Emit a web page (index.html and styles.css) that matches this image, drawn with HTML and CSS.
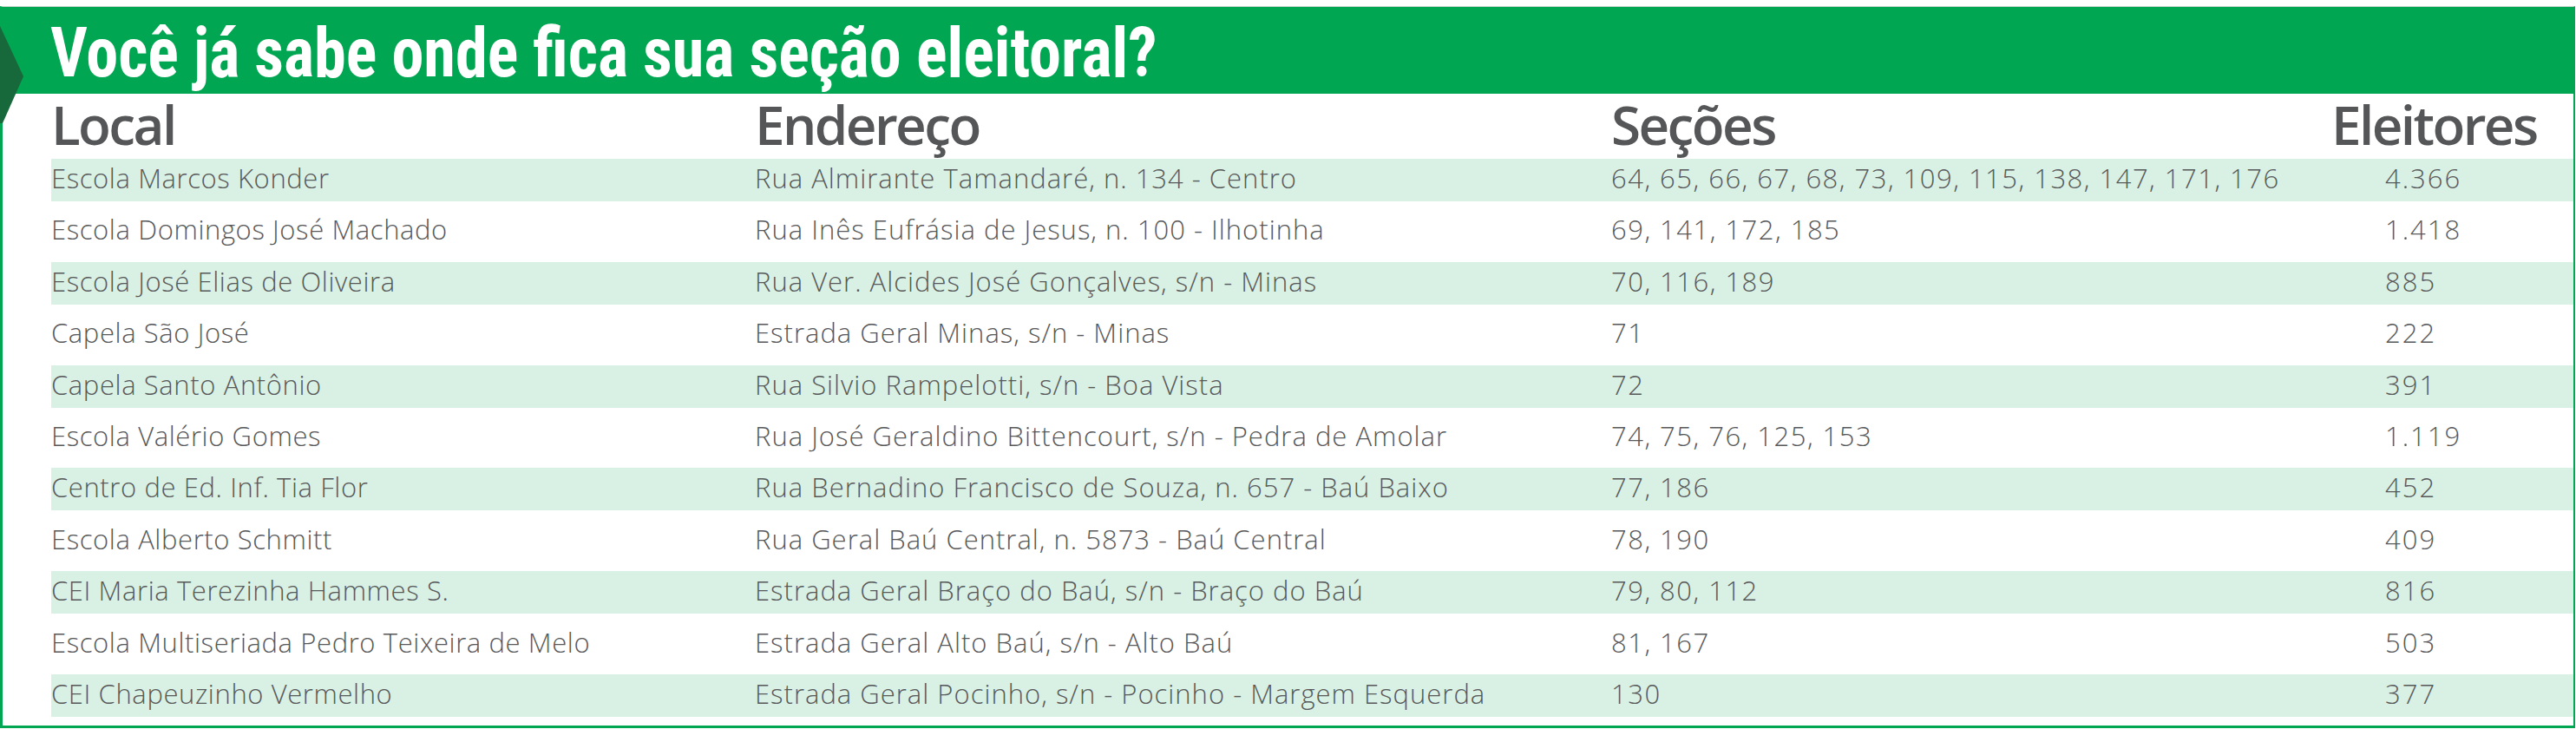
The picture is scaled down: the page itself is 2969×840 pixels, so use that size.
FILE: index.html
```html
<!DOCTYPE html>
<html lang="pt-BR">
<head>
<meta charset="utf-8">
<title>Você já sabe onde fica sua seção eleitoral?</title>
<link rel="stylesheet" href="styles.css">
</head>
<body>
<div class="frame">
  <svg class="arrow" width="28" height="113" viewBox="0 0 28 113" aria-hidden="true"><polygon points="0,0 27,58 3,112 0,112" fill="#17683a"/></svg>
  <div class="banner"><h1 class="title">Você já sabe onde fica sua seção eleitoral?</h1></div>
  <div class="row head">
    <div class="cell">Local</div>
    <div class="cell">Endereço</div>
    <div class="cell">Seções</div>
    <div class="cell">Eleitores</div>
  </div>
  <div class="rows">
    <div class="row alt"><div class="cell c-local">Escola Marcos Konder</div><div class="cell c-end">Rua Almirante Tamandaré, n. 134 - Centro</div><div class="cell c-sec">64, 65, 66, 67, 68, 73, 109, 115, 138, 147, 171, 176</div><div class="cell num">4.366</div></div>
    <div class="row"><div class="cell c-local">Escola Domingos José Machado</div><div class="cell c-end">Rua Inês Eufrásia de Jesus, n. 100 - Ilhotinha</div><div class="cell c-sec">69, 141, 172, 185</div><div class="cell num">1.418</div></div>
    <div class="row alt"><div class="cell c-local">Escola José Elias de Oliveira</div><div class="cell c-end">Rua Ver. Alcides José Gonçalves, s/n - Minas</div><div class="cell c-sec">70, 116, 189</div><div class="cell num">885</div></div>
    <div class="row"><div class="cell c-local">Capela São José</div><div class="cell c-end">Estrada Geral Minas, s/n - Minas</div><div class="cell c-sec">71</div><div class="cell num">222</div></div>
    <div class="row alt"><div class="cell c-local">Capela Santo Antônio</div><div class="cell c-end">Rua Silvio Rampelotti, s/n - Boa Vista</div><div class="cell c-sec">72</div><div class="cell num">391</div></div>
    <div class="row"><div class="cell c-local">Escola Valério Gomes</div><div class="cell c-end">Rua José Geraldino Bittencourt, s/n - Pedra de Amolar</div><div class="cell c-sec">74, 75, 76, 125, 153</div><div class="cell num">1.119</div></div>
    <div class="row alt"><div class="cell c-local">Centro de Ed. Inf. Tia Flor</div><div class="cell c-end">Rua Bernadino Francisco de Souza, n. 657 - Baú Baixo</div><div class="cell c-sec">77, 186</div><div class="cell num">452</div></div>
    <div class="row"><div class="cell c-local">Escola Alberto Schmitt</div><div class="cell c-end">Rua Geral Baú Central, n. 5873 - Baú Central</div><div class="cell c-sec">78, 190</div><div class="cell num">409</div></div>
    <div class="row alt"><div class="cell c-local">CEI Maria Terezinha Hammes S.</div><div class="cell c-end">Estrada Geral Braço do Baú, s/n - Braço do Baú</div><div class="cell c-sec">79, 80, 112</div><div class="cell num">816</div></div>
    <div class="row"><div class="cell c-local">Escola Multiseriada Pedro Teixeira de Melo</div><div class="cell c-end">Estrada Geral Alto Baú, s/n - Alto Baú</div><div class="cell c-sec">81, 167</div><div class="cell num">503</div></div>
    <div class="row alt"><div class="cell c-local">CEI Chapeuzinho Vermelho</div><div class="cell c-end">Estrada Geral Pocinho, s/n - Pocinho - Margem Esquerda</div><div class="cell c-sec">130</div><div class="cell num">377</div></div>
  </div>
</div>
</body>
</html>
```
FILE: styles.css
```css
html, body {
  margin: 0;
  padding: 0;
  background: #ffffff;
}
body {
  width: 2969px;
  height: 840px;
  padding-top: 7px;
  box-sizing: border-box;
  overflow: hidden;
}
.frame {
  position: relative;
  width: 2968px;
  box-sizing: border-box;
  border-top: 1px solid #c9d6cd;
  border-left: 3px solid #00a651;
  border-right: 2px solid #00a651;
  border-bottom: 3px solid #00a651;
  padding-bottom: 5px;
}
.arrow {
  position: absolute;
  left: -3px;
  top: 22px;
  display: block;
}
.banner {
  height: 100px;
  background: #00a651;
  box-sizing: border-box;
  padding-left: 55px;
  padding-top: 14px;
  white-space: nowrap;
}
.title {
  margin: 0;
  display: inline-block;
  font-family: Roboto, "Liberation Sans", sans-serif;
  font-weight: 700;
  font-stretch: 75%;
  font-size: 79px;
  line-height: 79px;
  color: #ffffff;
  letter-spacing: 0;
  transform: scaleX(0.94);
  transform-origin: left center;
}
.row {
  display: grid;
  grid-template-columns: 811px 987px 830px 1fr;
  padding-left: 56px;
  white-space: nowrap;
  color: #58595b;
}
.head {
  height: 69.8px;
  box-sizing: border-box;
  padding-top: 3.9px;
  font-family: "Open Sans", "Liberation Sans", sans-serif;
  font-weight: 600;
  font-size: 62px;
  line-height: 62px;
  letter-spacing: -2.6px;
  color: #555658;
}
.rows .row {
  height: 59.4px;
  box-sizing: border-box;
  padding-top: 5.2px;
  padding-bottom: 5.2px;
  background-clip: content-box;
  font-family: "Open Sans", "Liberation Sans", sans-serif;
  font-weight: 350;
  font-size: 31px;
  line-height: 44px;
}
.rows .row.alt {
  background-color: #d9f1e4;
}
.c-local {
  letter-spacing: 0.6px;
}
.c-end {
  letter-spacing: 1px;
}
.c-sec {
  letter-spacing: 1.5px;
}
.num {
  padding-left: 62px;
  letter-spacing: 2px;
}
```
